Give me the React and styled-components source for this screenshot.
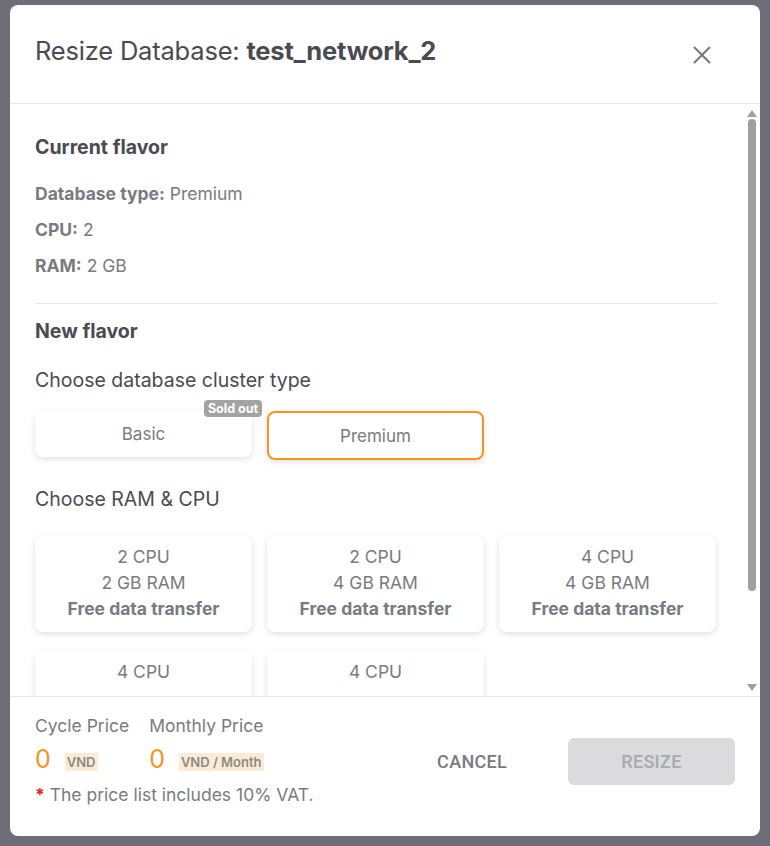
import React from "react";
import styled, { createGlobalStyle } from "styled-components";

const Global = createGlobalStyle`
  html,body{margin:0;padding:0;}
  body{background:#6f6d78;font-family:Inter,"Noto Sans",sans-serif;}
`;
const Backdrop = styled.div`
  height:846px;display:flex;justify-content:center;padding-top:5px;box-sizing:border-box;
`;
const Modal = styled.div`
  width:750px;height:831px;background:#fff;border-radius:8px;display:flex;flex-direction:column;overflow:hidden;
`;
const Header = styled.div`
  height:99px;border-bottom:1px solid #e6e6e6;display:flex;align-items:flex-start;justify-content:space-between;
  padding:30px 48px 0 25px;box-sizing:border-box;flex:none;
`;
const Title = styled.h1`
  margin:0;font-size:25.5px;font-weight:400;color:#4a4a52;letter-spacing:-0.2px;
  b{font-weight:700;}
`;
const Close = styled.button`
  border:0;background:none;padding:0;margin-top:10px;cursor:pointer;color:#777;display:flex;
`;
const BodyWrap = styled.div`
  flex:1;display:flex;min-height:0;
`;
const Body = styled.div`
  flex:1;padding:31px 26px 0 25px;overflow:hidden;
`;
const Scroll = styled.div`
  width:16px;display:flex;flex-direction:column;align-items:center;padding-top:6px;
`;
const Thumb = styled.div`
  width:8px;height:472px;background:#a0a0a0;border-radius:4px;margin:2px 0;
`;
const Arrow = styled.div`
  width:0;height:0;border-left:5px solid transparent;border-right:5px solid transparent;
  ${p=>p.up?"border-bottom:7px solid #a0a0a0;":"border-top:7px solid #a0a0a0;"}
`;
const H2 = styled.h2`
  margin:0;font-size:19.5px;font-weight:700;color:#4a4a52;
`;
const Info = styled.div`
  font-size:17.5px;color:#7a7a82;margin-top:${p=>p.first?"24px":"15px"};
  b{font-weight:700;}
`;
const Divider = styled.div`
  height:1px;background:#e6e6e6;margin:27px 0 15px;
`;
const Label = styled.div`
  font-size:19.5px;color:#4a4a52;margin-top:${p=>p.mt}px;
`;
const Row = styled.div`
  display:grid;grid-template-columns:repeat(3,217px);gap:15px;margin-top:${p=>p.mt}px;
`;
const TypeCard = styled.div`
  position:relative;height:${p=>p.active?"49px":"46px"};box-sizing:border-box;border-radius:8px;
  border:${p=>p.active?"2px solid #f7931e":"none"};
  box-shadow:0 2px 6px rgba(0,0,0,0.13);display:flex;align-items:center;justify-content:center;
  font-size:17px;color:#7a7a82;
`;
const Badge = styled.span`
  position:absolute;top:-11px;right:-10px;background:#a3a3a3;color:#fff;font-size:12.5px;font-weight:700;
  padding:1px 4px;border-radius:4px;
`;
const FlavorCard = styled.div`
  height:96px;border-radius:8px;box-shadow:0 2px 6px rgba(0,0,0,0.13);display:flex;flex-direction:column;
  align-items:center;padding-top:8px;box-sizing:border-box;font-size:17.5px;color:#7a7a82;line-height:26px;
  b{font-weight:700;}
`;
const Footer = styled.div`
  height:140px;flex:none;border-top:1px solid #e6e6e6;box-sizing:border-box;padding:18px 25px 0;
  display:flex;justify-content:space-between;
`;
const Prices = styled.div`display:flex;flex-direction:column;`;
const PriceRow = styled.div`display:flex;gap:20px;`;
const Price = styled.div`display:flex;flex-direction:column;`;
const PLabel = styled.div`font-size:17.5px;color:#7a7a82;`;
const PVal = styled.div`display:flex;align-items:center;gap:14px;margin-top:8px;`;
const Num = styled.span`font-size:25px;color:#f7931e;`;
const Unit = styled.span`font-size:13px;font-weight:600;color:#8a8a8a;background:#fdebd3;padding:1px 2px;margin-top:6px;`;
const Vat = styled.div`
  font-size:17.5px;color:#7a7a82;margin-top:10px;span{color:#e02020;font-weight:700;}
`;
const Actions = styled.div`display:flex;align-items:flex-start;gap:57px;padding-top:23px;`;
const Btn = styled.button`
  font-family:Roboto,sans-serif;font-size:18px;font-weight:500;border:0;border-radius:6px;cursor:pointer;
  height:47px;letter-spacing:0.3px;
  ${p=>p.primary?"width:167px;background:#dbdbdd;color:#a9a9ad;":"background:none;color:#7a7a82;padding:0 4px;"}
`;

export default function App(){
  return (<>
    <Global/>
    <Backdrop>
      <Modal>
        <Header>
          <Title>Resize Database: <b>test_network_2</b></Title>
          <Close><svg width="20" height="20" viewBox="0 0 20 20" stroke="currentColor" strokeWidth="2"><path d="M2 2L18 18M18 2L2 18"/></svg></Close>
        </Header>
        <BodyWrap>
          <Body>
            <H2>Current flavor</H2>
            <Info first><b>Database type:</b> Premium</Info>
            <Info><b>CPU:</b> 2</Info>
            <Info><b>RAM:</b> 2 GB</Info>
            <Divider/>
            <H2>New flavor</H2>
            <Label mt={25}>Choose database cluster type</Label>
            <Row mt={19}>
              <TypeCard>Basic<Badge>Sold out</Badge></TypeCard>
              <TypeCard active>Premium</TypeCard>
            </Row>
            <Label mt={27}>Choose RAM &amp; CPU</Label>
            <Row mt={25}>
              <FlavorCard><span>2 CPU</span><span>2 GB RAM</span><b>Free data transfer</b></FlavorCard>
              <FlavorCard><span>2 CPU</span><span>4 GB RAM</span><b>Free data transfer</b></FlavorCard>
              <FlavorCard><span>4 CPU</span><span>4 GB RAM</span><b>Free data transfer</b></FlavorCard>
            </Row>
            <Row mt={19}>
              <FlavorCard><span>4 CPU</span></FlavorCard>
              <FlavorCard><span>4 CPU</span></FlavorCard>
            </Row>
          </Body>
          <Scroll>
            <Arrow up/>
            <Thumb/>
            <div style={{flex:1}}/>
            <Arrow/>
            <div style={{height:5}}/>
          </Scroll>
        </BodyWrap>
        <Footer>
          <Prices>
            <PriceRow>
              <Price><PLabel>Cycle Price</PLabel><PVal><Num>0</Num><Unit>VND</Unit></PVal></Price>
              <Price><PLabel>Monthly Price</PLabel><PVal><Num>0</Num><Unit>VND / Month</Unit></PVal></Price>
            </PriceRow>
            <Vat><span>*</span> The price list includes 10% VAT.</Vat>
          </Prices>
          <Actions>
            <Btn>CANCEL</Btn>
            <Btn primary>RESIZE</Btn>
          </Actions>
        </Footer>
      </Modal>
    </Backdrop>
  </>);
}
